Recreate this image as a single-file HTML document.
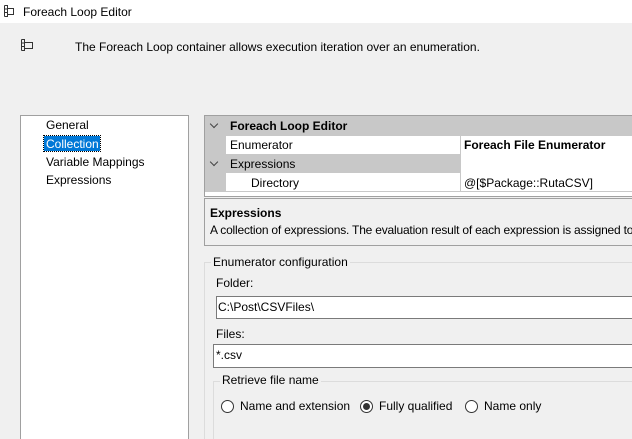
<!DOCTYPE html>
<html style="overflow:hidden;width:632px;height:439px"><head><style>
body{margin:0;width:632px;height:439px;overflow:hidden;background:#f0f0f0;font-family:"Liberation Sans",sans-serif;font-size:12px;color:#000;position:relative}
.a{position:absolute;white-space:nowrap}
.tb{position:absolute;left:0;top:0;width:632px;height:23px;background:#fff}
.rad{position:absolute;width:11px;height:11px;border:1px solid #333;border-radius:50%;background:#fff}
.chev{position:absolute;width:5px;height:5px;border-right:1.3px solid #444;border-bottom:1.3px solid #444;transform:rotate(45deg)}
</style></head><body>
<div class="tb"></div>
<svg class="a" style="left:3px;top:4px" width="12" height="14"><path d="M1.5 1.5v11M1.5 1.5h3v11h-3M4.5 4.5h6v6h-6M1.5 5h3M1.5 8.5h3" stroke="#333" fill="none"/></svg>
<div class="a" style="left:23px;top:5px">Foreach Loop Editor</div>
<svg class="a" style="left:20px;top:38px" width="14" height="14"><path d="M1.5 1.5v11M1.5 1.5h3v11h-3M4.5 4.5h8v6h-8M1.5 5h3M1.5 8.5h3" stroke="#333" fill="none"/></svg>
<div class="a" style="left:75px;top:40px">The Foreach Loop container allows execution iteration over an enumeration.</div>

<div class="a" style="left:20px;top:115px;width:167px;height:330px;background:#fff;border:1px solid #a0a0a0;border-bottom:none"></div>
<div class="a" style="left:46px;top:118px">General</div>
<div class="a" style="left:44px;top:136px;width:56px;height:15px;background:#0078d7;outline:1px dotted #000"></div>
<div class="a" style="left:46px;top:137px;color:#fff">Collection</div>
<div class="a" style="left:46px;top:155px">Variable Mappings</div>
<div class="a" style="left:46px;top:173px">Expressions</div>

<div class="a" style="left:204px;top:115px;width:430px;height:80px;background:#fff;border:1px solid #a0a0a0"></div>
<div class="a" style="left:205px;top:116px;width:430px;height:20px;background:#c8c8c8"></div>
<div class="a" style="left:205px;top:136px;width:21px;height:56px;background:#c8c8c8"></div>
<div class="a" style="left:205px;top:154px;width:430px;height:19px;background:#c8c8c8"></div>
<div class="a" style="left:460px;top:154px;width:175px;height:19px;background:#fff"></div>
<div class="a" style="left:460px;top:136px;width:1px;height:56px;background:#c8c8c8"></div>
<div class="a" style="left:205px;top:191px;width:430px;height:1px;background:#c8c8c8"></div>
<div class="chev" style="left:211px;top:121px"></div>
<div class="chev" style="left:211px;top:159px"></div>
<div class="a" style="left:230px;top:119px;font-weight:bold">Foreach Loop Editor</div>
<div class="a" style="left:230px;top:138px">Enumerator</div>
<div class="a" style="left:464px;top:138px;font-weight:bold">Foreach File Enumerator</div>
<div class="a" style="left:230px;top:157px">Expressions</div>
<div class="a" style="left:251px;top:176px">Directory</div>
<div class="a" style="left:464px;top:176px">@[$Package::RutaCSV]</div>

<div class="a" style="left:204px;top:198px;width:430px;height:46px;border:1px solid #a0a0a0;overflow:hidden"></div>
<div class="a" style="left:210px;top:206px;font-weight:bold">Expressions</div>
<div class="a" style="left:210px;top:223px;letter-spacing:-0.2px">A collection of expressions. The evaluation result of each expression is assigned to</div>

<div class="a" style="left:204px;top:262px;width:430px;height:180px;border-left:1px solid #dcdcdc;border-top:1px solid #dcdcdc"></div>
<div class="a" style="left:211px;top:255px;background:#f0f0f0;padding:0 2px">Enumerator configuration</div>
<div class="a" style="left:216px;top:276px">Folder:</div>
<div class="a" style="left:216px;top:296px;width:420px;height:21px;background:#fff;border:1px solid #7a7a7a"></div>
<div class="a" style="left:218px;top:300px">C:\Post\CSVFiles\</div>
<div class="a" style="left:216px;top:327px">Files:</div>
<div class="a" style="left:213px;top:344px;width:423px;height:22px;background:#fff;border:1px solid #7a7a7a"></div>
<div class="a" style="left:216px;top:348px">*.csv</div>

<div class="a" style="left:213px;top:381px;width:430px;height:60px;border-left:1px solid #dcdcdc;border-top:1px solid #dcdcdc"></div>
<div class="a" style="left:220px;top:373px;background:#f0f0f0;padding:0 2px">Retrieve file name</div>
<div class="rad" style="left:221px;top:400px"></div>
<div class="a" style="left:240px;top:399px">Name and extension</div>
<div class="rad" style="left:360px;top:400px"></div>
<div class="a" style="left:363px;top:403px;width:7px;height:7px;border-radius:50%;background:#333"></div>
<div class="a" style="left:379px;top:399px">Fully qualified</div>
<div class="rad" style="left:465px;top:400px"></div>
<div class="a" style="left:484px;top:399px">Name only</div>
</body></html>
